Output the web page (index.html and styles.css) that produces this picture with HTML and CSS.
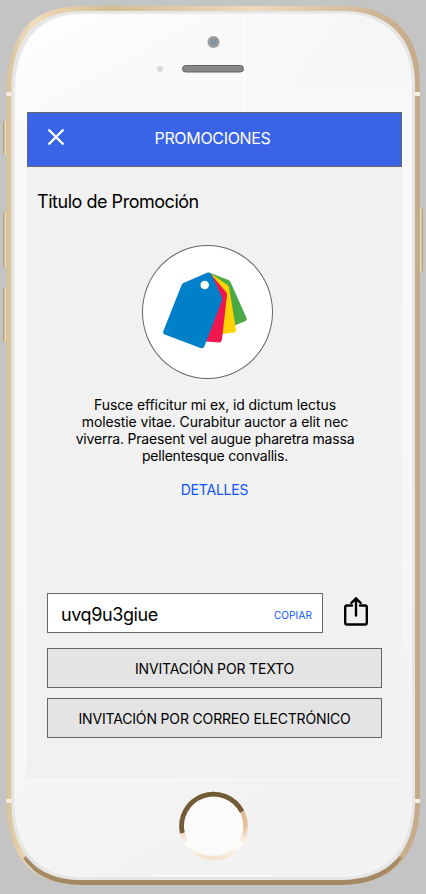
FILE: index.html
```html
<!DOCTYPE html>
<html lang="es">
<head>
<meta charset="utf-8">
<title>Promociones</title>
<link rel="stylesheet" href="styles.css">
</head>
<body>
<div class="phone">
  <svg class="phone-body" viewBox="0 0 426 894" aria-hidden="true">
    <defs>
      <linearGradient id="gold" x1="0" y1="0" x2="1" y2="0">
        <stop offset="0" stop-color="#d8c29a"/><stop offset=".06" stop-color="#f0dcbb"/><stop offset=".25" stop-color="#d3bd94"/><stop offset=".6" stop-color="#ecd9bd"/><stop offset="1" stop-color="#c5aa88"/>
      </linearGradient>
      <linearGradient id="goldBottom" x1="0" y1="0" x2="0" y2="1">
        <stop offset="0" stop-color="#a58a66" stop-opacity="0"/><stop offset=".25" stop-color="#a58a66"/><stop offset="1" stop-color="#a38963"/>
      </linearGradient>
      <linearGradient id="face" x1="0" y1="0" x2=".25" y2="1">
        <stop offset="0" stop-color="#ffffff"/><stop offset=".14" stop-color="#f9f9f9"/><stop offset=".8" stop-color="#f7f7f7"/><stop offset="1" stop-color="#f2f2f2"/>
      </linearGradient>
      <linearGradient id="key" x1="0" y1="0" x2="1" y2="0">
        <stop offset="0" stop-color="#a99068"/><stop offset=".5" stop-color="#ecdcc0"/><stop offset="1" stop-color="#b09467"/>
      </linearGradient>
      <linearGradient id="shine" x1="0" y1="0" x2="0" y2="1">
        <stop offset="0" stop-color="#f6f6f6"/><stop offset="1" stop-color="#f8f8f8"/>
      </linearGradient>
      <linearGradient id="ring" x1="0" y1="0" x2="0" y2="1">
        <stop offset="0" stop-color="#dfb68c"/><stop offset=".5" stop-color="#e6c096"/><stop offset=".8" stop-color="#ffffff"/><stop offset="1" stop-color="#f3e3cb"/>
      </linearGradient>
    </defs>
    <g fill="url(#key)">
      <rect x="3" y="121" width="5" height="33" rx="1.5"/>
      <rect x="3" y="212" width="5" height="55" rx="1.5"/>
      <rect x="3" y="287" width="5" height="55" rx="1.5"/>
      <rect x="418" y="208" width="5" height="64" rx="1.5"/>
    </g>
    <path fill="url(#gold)" d="M80 6H345C392 6 418 35 419.500 75L420 95V800C420 850 398 885 340 885H82C30 885 6.500 856 6.500 800V95C7 36 29 7 80 6Z"/>
    <path fill="url(#goldBottom)" d="M23 858Q40 885 82 885H340Q384 885 402 858L390 850H35Z"/>
    <path fill="#e6e6e6" d="M80 11H345C390 12 413 39 415 80V805C413 850 392 880 340 880H80C34 880 12 850 11.500 805V85C13 36 36 12 80 11Z"/>
    <path fill="url(#face)" stroke="#f6f6f6" d="M80 14H345C387 15 410 42 411.500 83V803C410 848 388 876 340 876.500H80C36 876 16 848 15 803V88C17 40 40 15 80 14Z"/>
    <path fill="url(#shine)" d="M338 15H345C387 16 409 42 411 83V111H269Q274 103 279 94L335 21Z"/>
    <path stroke="#fff" d="M244.500 15V111"/>
    <path stroke="#fafafa" d="M27 779.500H400"/>
    <path stroke="#fff" d="M154 875.500H272"/>
    <path stroke="#f7efe1" stroke-width="4" d="M6.500 94H11.500M415 94H420M6.500 801H11.500M415 801H420"/>
    <circle cx="160" cy="69" r="3" fill="#d9d9d9"/>
    <circle cx="213.500" cy="42" r="6" fill="#999b9e"/>
    <circle cx="213.500" cy="42" r="3" fill="#8392a5"/>
    <rect x="182.500" y="65.500" width="61" height="6.500" rx="3.200" fill="#888" stroke="#626262"/>
    <circle cx="213.500" cy="826" r="32" fill="#fbfbfb" stroke="url(#ring)" stroke-width="4.500"/>
    <path fill="none" stroke="#725c38" stroke-width="4.800" d="M182.300 833A32 32 0 0 1 242.100 811.700"/>
  </svg>

  <main class="screen">
    <header class="bar">
      <svg class="close" viewBox="0 0 18 18" role="img" aria-label="Cerrar"><path d="M1.500 1.500 16.500 16.500M16.500 1.500 1.500 16.500"/></svg>
      <h1 class="bar-title">PROMOCIONES</h1>
    </header>
    <h2 class="title">Titulo de Promoción</h2>
    <div class="avatar">
      <svg class="tags" viewBox="0 0 84 76" aria-hidden="true">
        <path fill="#4aa847" d="M46 .5 65.500 8Q67 8.500 67.500 10L83.500 46Q84.300 48 82.500 49L64 56.500Q62 57 61 55L40 8Z"/>
        <path fill="#ffd200" d="M47 1 64.500 13Q66 14 66.200 16L73 57.500Q73.200 60 71 60.500L52 63Q50 63 50 61L42 12Z"/>
        <path fill="#f0174e" d="M47 1 63 20Q64 21.300 64 23L59 67Q58.500 70.500 56 70.500L36 69Q34 69 34 66L40 12Z"/>
        <path fill="#0080c8" d="M20.500 11 44 .8Q47 -.2 48.500 2.600L58.800 25Q59.600 26.500 59 28.500L41.500 74Q40.500 77 37.500 76L1.800 62.500Q-.7 61.500.4 59L18.200 14Q19 11.700 20.500 11Z"/>
        <circle cx="41.700" cy="13" r="4.300" fill="#fff"/>
      </svg>
    </div>
    <p class="copy"><span class="loose">Fusce efficitur mi ex, id dictum lectus<br>molestie vitae. Curabitur auctor a elit nec</span><br>viverra. Praesent vel augue pharetra massa<br>pellentesque convallis.</p>
    <a class="details">DETALLES</a>
    <section class="actions">
      <div class="share-row">
        <div class="code"><span class="code-value">uvq9u3giue</span><a class="code-copy">COPIAR</a></div>
        <svg class="share" viewBox="0 0 24 29" role="img" aria-label="Compartir"><path d="M8 8.500H3Q1.200 8.500 1.200 10.300V25.700Q1.200 27.500 3 27.500H21Q22.800 27.500 22.800 25.700V10.300Q22.800 8.500 21 8.500H16M12 18.500V2M7.300 6 12 1.300 16.700 6"/></svg>
      </div>
      <button class="button button-text">INVITACIÓN POR TEXTO</button>
      <button class="button button-mail">INVITACIÓN POR CORREO ELECTRÓNICO</button>
    </section>
  </main>
</div>
</body>
</html>
```
FILE: styles.css
```css
* { box-sizing: border-box; }
body { margin: 0; background: #c4c4c4; color: #000; font-family: Inter, "Liberation Sans", sans-serif; }
.phone { position: relative; width: 426px; height: 894px; padding: 112px 24px 0 27px; overflow: hidden; }
.phone-body { position: absolute; inset: 0; width: 426px; height: 894px; }
.screen { position: relative; height: 667px; display: flex; flex-direction: column; background: #f1f1f1; }
.bar { display: grid; grid-template-columns: 36px 1fr 40px; align-items: center; height: 55px; padding: 0 0 4px; border: 1px solid #666; background: #3a64e6; color: #fff; }
.close { width: 18px; height: 18px; margin: -2px 0 0 19px; fill: none; stroke: #fff; stroke-width: 2.3; }
.bar-title { margin: 0; text-align: center; font-size: 16px; font-weight: 400; line-height: 20px; letter-spacing: -.33px; }
.title { margin: 23px 0 0 10px; font-size: 18px; font-weight: 400; line-height: 24px; letter-spacing: -.47px; }
.avatar { display: flex; width: 131px; height: 134px; margin: 31px 0 0 115px; padding: 26px 0 0 20px; border: 1px solid #666; border-radius: 50%; background: #fff; }
.tags { width: 84px; height: 76px; overflow: visible; }
.copy { margin: 17px 0 0; padding-left: 1px; text-align: center; font-size: 14px; line-height: 17px; letter-spacing: -.19px; }
.loose { letter-spacing: -.11px; }
.details { margin-top: 17px; text-align: center; font-size: 14px; line-height: 17px; color: #0a55ff; letter-spacing: -.2px; }
.actions { display: flex; flex-direction: column; gap: 10px; margin: 95px 20px 0; }
.share-row { display: flex; justify-content: space-between; margin-bottom: 5px; padding-right: 14px; }
.code { display: flex; align-items: center; justify-content: space-between; width: 276px; height: 40px; padding: 3px 10px 0 13px; border: 1px solid #666; background: #fff; }
.code-value { font-size: 18px; letter-spacing: -.4px; }
.code-copy { font-size: 10px; letter-spacing: .12px; color: #0a55ff; }
.share { width: 24px; height: 29px; margin-top: 4px; fill: none; stroke: #000; stroke-width: 2.4; stroke-linecap: round; }
.button { height: 40px; padding: 0; border: 1px solid #666; border-radius: 0; background: #e4e4e4; color: #000; font: 14px/17px Inter, "Liberation Sans", sans-serif; letter-spacing: -.16px; }
```
